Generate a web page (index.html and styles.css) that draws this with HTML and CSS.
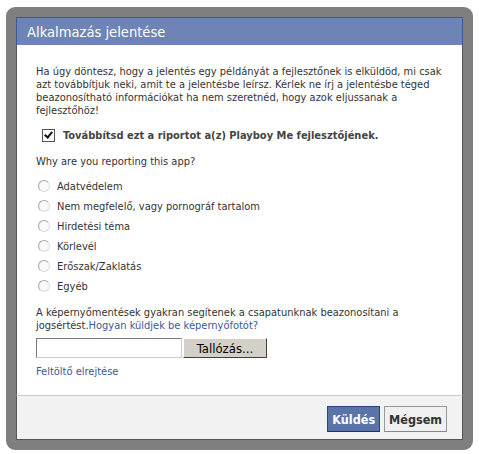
FILE: index.html
```html
<!DOCTYPE html>
<html lang="hu">
<head>
  <meta charset="UTF-8" />
  <title>Alkalmazás jelentése</title>
  <link rel="stylesheet" href="styles.css">
</head>
<body>

  <div class="frame">
    <div class="dialog">
      <h2 class="dialog-title">Alkalmazás jelentése</h2>

      <div class="dialog-body">
        <p class="intro">Ha úgy döntesz, hogy a jelentés egy példányát a fejlesztőnek is elküldöd, mi csak azt továbbítjuk neki, amit te a jelentésbe leírsz. Kérlek ne írj a jelentésbe téged beazonosítható információkat ha nem szeretnéd, hogy azok eljussanak a fejlesztőhöz!</p>

        <label class="forward">
          <span class="checkbox checked"></span>
          Továbbítsd ezt a riportot a(z) Playboy Me fejlesztőjének.
        </label>

        <p class="question">Why are you reporting this app?</p>

        <ul class="reasons">
          <li><span class="radio"></span>Adatvédelem</li>
          <li><span class="radio"></span>Nem megfelelő, vagy pornográf tartalom</li>
          <li><span class="radio"></span>Hirdetési téma</li>
          <li><span class="radio"></span>Körlevél</li>
          <li><span class="radio"></span>Erőszak/Zaklatás</li>
          <li><span class="radio"></span>Egyéb</li>
        </ul>

        <p class="screens">A képernyőmentések gyakran segítenek a csapatunknak beazonosítani a jogsértést.<a href="#">Hogyan küldjek be képernyőfotót?</a></p>

        <div class="upload">
          <input type="text" class="file-name">
          <button class="browse">Tallózás...</button>
        </div>

        <a href="#" class="hide-upload">Feltöltő elrejtése</a>
      </div>

      <div class="dialog-footer">
        <button class="btn btn-primary">Küldés</button>
        <button class="btn">Mégsem</button>
      </div>
    </div>
  </div>

</body>
</html>
```

FILE: styles.css
```css
body {
  margin: 0;
  background: #fff;
  font-family: "DejaVu Sans Condensed", "DejaVu Sans", sans-serif;
  font-size: 11px;
  color: #333;
}

.frame {
  margin: 7px 0 0 6px;
  width: 447px;
  border: 10px solid #7f7f7f;
  border-radius: 9px;
  background: #7f7f7f;
}

.dialog {
  background: #fff;
}

.dialog-title {
  margin: 0;
  height: 27px;
  line-height: 27px;
  padding-left: 10px;
  background: #6d84b4;
  border: 1px solid #3b5998;
  border-bottom: none;
  color: #fff;
  font-size: 14.6px;
  font-weight: normal;
}

.dialog-body {
  padding: 20px 20px 17px 19px;
  border-left: 1px solid #555;
  border-right: 1px solid #555;
  line-height: 13px;
}

.intro {
  margin: 0;
}

.forward {
  display: flex;
  align-items: center;
  gap: 8px;
  height: 16px;
  margin: 10px 0 0 6px;
  font-weight: bold;
  color: #444;
}

.checkbox {
  width: 11px;
  height: 11px;
  border: 1px solid #555;
  background: #fff;
  position: relative;
}

.checkbox.checked::after {
  content: "";
  position: absolute;
  left: 3px;
  top: 0px;
  width: 3px;
  height: 6px;
  border: solid #111;
  border-width: 0 2px 2px 0;
  transform: rotate(40deg);
}

.question {
  margin: 12px 0 0;
}

.reasons {
  list-style: none;
  margin: 8px 0 0;
  padding: 0;
}

.reasons li {
  display: flex;
  align-items: center;
  height: 20px;
}

.radio {
  width: 10px;
  height: 10px;
  margin: 0 7px 0 2px;
  border-radius: 50%;
  border: 1px solid #a5a5a5;
  border-right-color: #dcdcdc;
  border-bottom-color: #dcdcdc;
  background: #fafafa;
}

.screens {
  margin: 10px 0 0;
}

.screens a,
.hide-upload {
  color: #3b5998;
  text-decoration: none;
}

.upload {
  display: flex;
  margin-top: 6px;
  height: 20px;
}

.file-name {
  box-sizing: border-box;
  width: 146px;
  height: 20px;
  margin: 0 1px 0 0;
  border: 1px solid #7a7a7a;
  border-right-color: #ccc;
  border-bottom-color: #ccc;
  padding: 0;
}

.browse {
  box-sizing: border-box;
  width: 84px;
  height: 20px;
  padding: 0;
  background: #d4d0c8;
  border: 1px solid;
  border-color: #fff #404040 #404040 #fff;
  font-family: inherit;
  font-size: 13px;
  color: #000;
}

.hide-upload {
  display: block;
  margin-top: 7px;
}

.dialog-footer {
  display: flex;
  justify-content: flex-end;
  gap: 4px;
  padding: 10px 15px 7px;
  background: #f2f2f2;
  border: 1px solid #555;
  border-top: 1px solid #ccc;
}

.btn {
  height: 26px;
  padding: 0 4px;
  font-family: inherit;
  font-size: 12.5px;
  font-weight: bold;
  color: #333;
  background: #f0f0f0;
  border: 1px solid #999;
  border-bottom-color: #888;
}

.btn-primary {
  background: #5b74a8;
  border-color: #29447e #29447e #1a356e;
  color: #fff;
}
```
